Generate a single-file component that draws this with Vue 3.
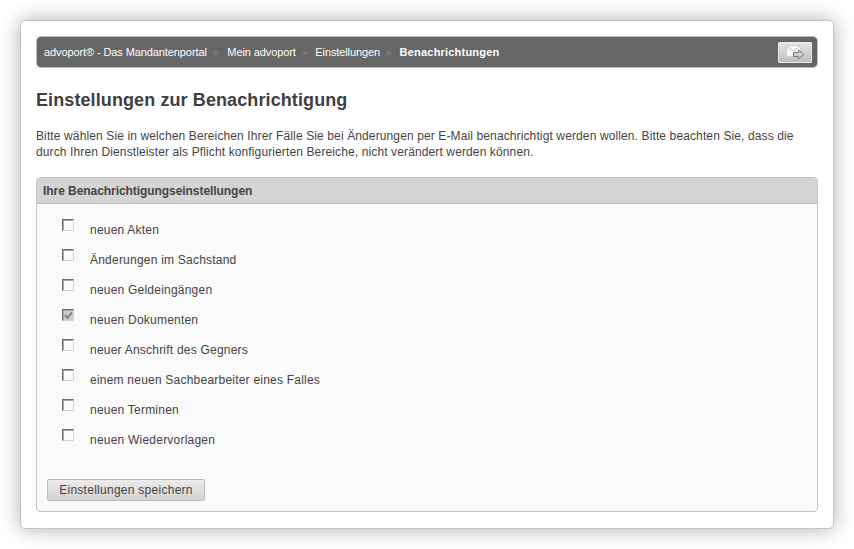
<script setup>
const items = [
  { label: 'neuen Akten', checked: false },
  { label: 'Änderungen im Sachstand', checked: false },
  { label: 'neuen Geldeingängen', checked: false },
  { label: 'neuen Dokumenten', checked: true },
  { label: 'neuer Anschrift des Gegners', checked: false },
  { label: 'einem neuen Sachbearbeiter eines Falles', checked: false },
  { label: 'neuen Terminen', checked: false },
  { label: 'neuen Wiedervorlagen', checked: false },
]
const crumbs = ['advoport® - Das Mandantenportal', 'Mein advoport', 'Einstellungen']
</script>

<template>
  <div class="page">
    <main class="card">
      <nav class="crumbbar">
        <div class="crumbs">
          <template v-for="c in crumbs" :key="c">
            <span class="crumb">{{ c }}</span>
            <span class="sep">»</span>
          </template>
          <strong class="current">Benachrichtungen</strong>
        </div>
        <button class="mailbtn" type="button" aria-label="E-Mail">
          <svg width="20" height="15" viewBox="0 0 20 15">
            <rect x="1.5" y="0.5" width="14" height="11" fill="#f6f6f3" stroke="#d2d2ce" />
            <path d="M2 1 L8.5 6.5 L15 1" fill="none" stroke="#c2c2be" />
            <path d="M8.5 7.5 h5 v-2.5 l5.5 4.5 l-5.5 4.5 v-2.5 h-5 z" fill="#c9c9c5" stroke="#7a7a7a" />
          </svg>
        </button>
      </nav>

      <h1 class="title">Einstellungen zur Benachrichtigung</h1>
      <p class="intro">Bitte wählen Sie in welchen Bereichen Ihrer Fälle Sie bei Änderungen per E-Mail benachrichtigt werden wollen. Bitte beachten Sie, dass die durch Ihren Dienstleister als Pflicht konfigurierten Bereiche, nicht verändert werden können.</p>

      <section class="panel">
        <h2 class="panelhead">Ihre Benachrichtigungseinstellungen</h2>
        <div class="panelbody">
          <label v-for="i in items" :key="i.label" class="row">
            <span class="box" :class="{ on: i.checked }">
              <svg v-if="i.checked" width="9" height="9" viewBox="0 0 9 9">
                <path d="M1 4 L3.5 7 L8 1.5" fill="none" stroke="#858585" stroke-width="2" />
              </svg>
            </span>
            <span class="label">{{ i.label }}</span>
          </label>
          <button class="save" type="button">Einstellungen speichern</button>
        </div>
      </section>
    </main>
  </div>
</template>

<style>
html, body { margin: 0; background: #fff; }
</style>

<style scoped>
.page {
  width: 854px;
  height: 549px;
  box-sizing: border-box;
  padding: 20px;
  overflow: hidden;
  font-family: "Liberation Sans", Arial, sans-serif;
  font-size: 12px;
  color: #444;
}
.card {
  width: 814px;
  height: 509px;
  box-sizing: border-box;
  padding: 15px;
  background: #fff;
  border: 1px solid #c4c4c4;
  border-radius: 5px;
  box-shadow: 0 0 20px rgba(0, 0, 0, 0.32);
}
.crumbbar {
  height: 32px;
  box-sizing: border-box;
  display: flex;
  align-items: center;
  justify-content: space-between;
  padding: 0 0 0 7px;
  background: #666;
  border: 1px solid #bbb;
  border-radius: 5px;
}
.crumbs { display: flex; align-items: center; color: #fff; font-size: 11px; }
.crumb { letter-spacing: -0.1px; }
.sep { color: #8c8c8c; margin: 0 9px 0 6px; font-size: 10px; }
.crumb + .sep + .crumb + .sep { margin-right: 8px; }
.current { font-weight: bold; letter-spacing: 0.2px; }
.mailbtn {
  width: 34px;
  height: 21px;
  margin-right: 5px;
  padding: 0;
  display: flex;
  align-items: center;
  justify-content: center;
  background: linear-gradient(#e6e6e6, #bdbdbd);
  border: 1px solid #e8e8e8;
  border-radius: 1px;
}
.title {
  margin: 21px 0 0;
  font-size: 18px;
  line-height: 22px;
  font-weight: bold;
  color: #404040;
  letter-spacing: 0.1px;
}
.intro {
  margin: 17px 0 0;
  line-height: 16px;
  color: #444;
  letter-spacing: 0.01em;
}
.panel {
  margin-top: 17px;
  height: 335px;
  box-sizing: border-box;
  border: 1px solid #c4c4c4;
  border-radius: 4px;
  background: #fafafa;
  overflow: hidden;
}
.panelhead {
  margin: 0;
  height: 26px;
  box-sizing: border-box;
  padding-left: 6px;
  line-height: 27px;
  font-size: 12px;
  font-weight: bold;
  color: #444;
  background: #d4d4d4;
  border-bottom: 1px solid #c0c0c0;
  letter-spacing: -0.06px;
}
.panelbody { padding: 10px 10px 0; }
.row {
  display: flex;
  height: 30px;
  padding-left: 15px;
}
.box {
  width: 12px;
  height: 12px;
  box-sizing: border-box;
  margin-top: 5px;
  display: flex;
  align-items: center;
  justify-content: center;
  background: #fbfbfa;
  border-style: solid;
  border-width: 1px;
  border-color: #6a6a6a #d5d5d0 #d5d5d0 #6a6a6a;
  box-shadow: inset 1px 1px 0 #a8a8a8;
}
.box.on { background: #cfcdc8; }
.label {
  margin-left: 16px;
  line-height: 30px;
  height: 30px;
  padding-top: 1px;
  letter-spacing: 0.22px;
  color: #444;
}
.save {
  display: block;
  margin-top: 25px;
  width: 158px;
  height: 22px;
  padding: 0;
  font: 12px "Liberation Sans", Arial, sans-serif;
  letter-spacing: 0.27px;
  color: #444;
  background: linear-gradient(#ececec, #d2d2d2);
  border: 1px solid #bbb;
  border-radius: 2px;
}
</style>
